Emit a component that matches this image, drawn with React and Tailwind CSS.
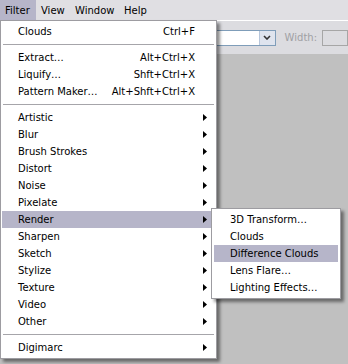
import React from 'react';

// Photoshop-style Filter menu, XP look
const Arrow = () => (
  <svg width="4" height="7" viewBox="0 0 4 7" className="block">
    <polygon points="0,0 4,3.5 0,7" fill="#000" />
  </svg>
);

const Sep = () => (
  <div className="h-[9px] flex items-center px-[1px]">
    <div className="h-px w-full bg-[#a6a5aa]" />
  </div>
);

function Item({ label, shortcut, sub, active }) {
  return (
    <div className={"h-[17px] flex items-center pl-[16px] " + (active ? 'bg-[#b6b5c9]' : '')}>
      <span className="whitespace-nowrap">{label}</span>
      <span className="flex-1" />
      {shortcut && <span className="whitespace-nowrap">{shortcut}</span>}
      <span className="w-[20px] flex items-center">
        {sub && <span className="ml-[8px]"><Arrow /></span>}
      </span>
    </div>
  );
}

export default function App() {
  const top = [
    { label: 'Extract…', shortcut: 'Alt+Ctrl+X' },
    { label: 'Liquify…', shortcut: 'Shft+Ctrl+X' },
    { label: 'Pattern Maker…', shortcut: 'Alt+Shft+Ctrl+X' },
  ];
  const groups = ['Artistic', 'Blur', 'Brush Strokes', 'Distort', 'Noise', 'Pixelate', 'Render',
    'Sharpen', 'Sketch', 'Stylize', 'Texture', 'Video', 'Other'];
  const render = ['3D Transform…', 'Clouds', 'Difference Clouds', 'Lens Flare…', 'Lighting Effects…'];

  return (
    <div className="relative w-[348px] h-[364px] overflow-hidden bg-[#c0c0c0] text-black font-['DejaVu_Sans',sans-serif] text-[10px]">
      {/* menu bar */}
      <div className="h-[20px] bg-[#e0dfe3] flex items-stretch">
        <div className="w-[36px] pl-[5px] flex items-center bg-[#b6b5c9]">Filter</div>
        <div className="w-[34px] pl-[5px] flex items-center">View</div>
        <div className="w-[49px] pl-[5px] flex items-center">Window</div>
        <div className="w-[40px] pl-[5px] flex items-center">Help</div>
      </div>

      {/* options toolbar */}
      <div className="h-[34px] border-t border-white bg-[#dcdce0] flex items-center pl-[200px]">
        <div className="w-[88px] h-[16px] border border-[#7f9db9] bg-white flex justify-end">
          <div className="w-[16px] h-full border-l border-[#b7c6db] bg-[#dfe4ee] flex items-center justify-center">
            <svg width="8" height="5" viewBox="0 0 8 5">
              <polyline points="1,1 4,4 7,1" fill="none" stroke="#333" strokeWidth="1.6" />
            </svg>
          </div>
        </div>
        <span className="ml-[9px] text-[#a0a0a4]">Width:</span>
        <div className="ml-[5px] w-[30px] h-[16px] border border-[#a6a6a6] bg-[#dcdce0]" />
      </div>

      {/* Filter menu */}
      <div className="absolute left-0 top-[20px] w-[217px] border border-[#9d9ca1] bg-white px-[1px] py-[2px] shadow-[3px_3px_3px_rgba(0,0,0,0.45)]">
        <Item label="Clouds" shortcut="Ctrl+F" />
        <Sep />
        {top.map(t => <Item key={t.label} label={t.label} shortcut={t.shortcut} />)}
        <Sep />
        {groups.map(g => <Item key={g} label={g} sub active={g === 'Render'} />)}
        <Sep />
        <Item label="Digimarc" sub />
      </div>

      {/* Render submenu */}
      <div className="absolute left-[211px] top-[208px] w-[130px] border border-[#9d9ca1] bg-white p-[2px] shadow-[3px_3px_3px_rgba(0,0,0,0.45)]">
        {render.map(r => (
          <div key={r} className={"h-[17px] flex items-center pl-[16px] whitespace-nowrap " + (r === 'Difference Clouds' ? 'bg-[#b6b5c9]' : '')}>{r}</div>
        ))}
      </div>
    </div>
  );
}
